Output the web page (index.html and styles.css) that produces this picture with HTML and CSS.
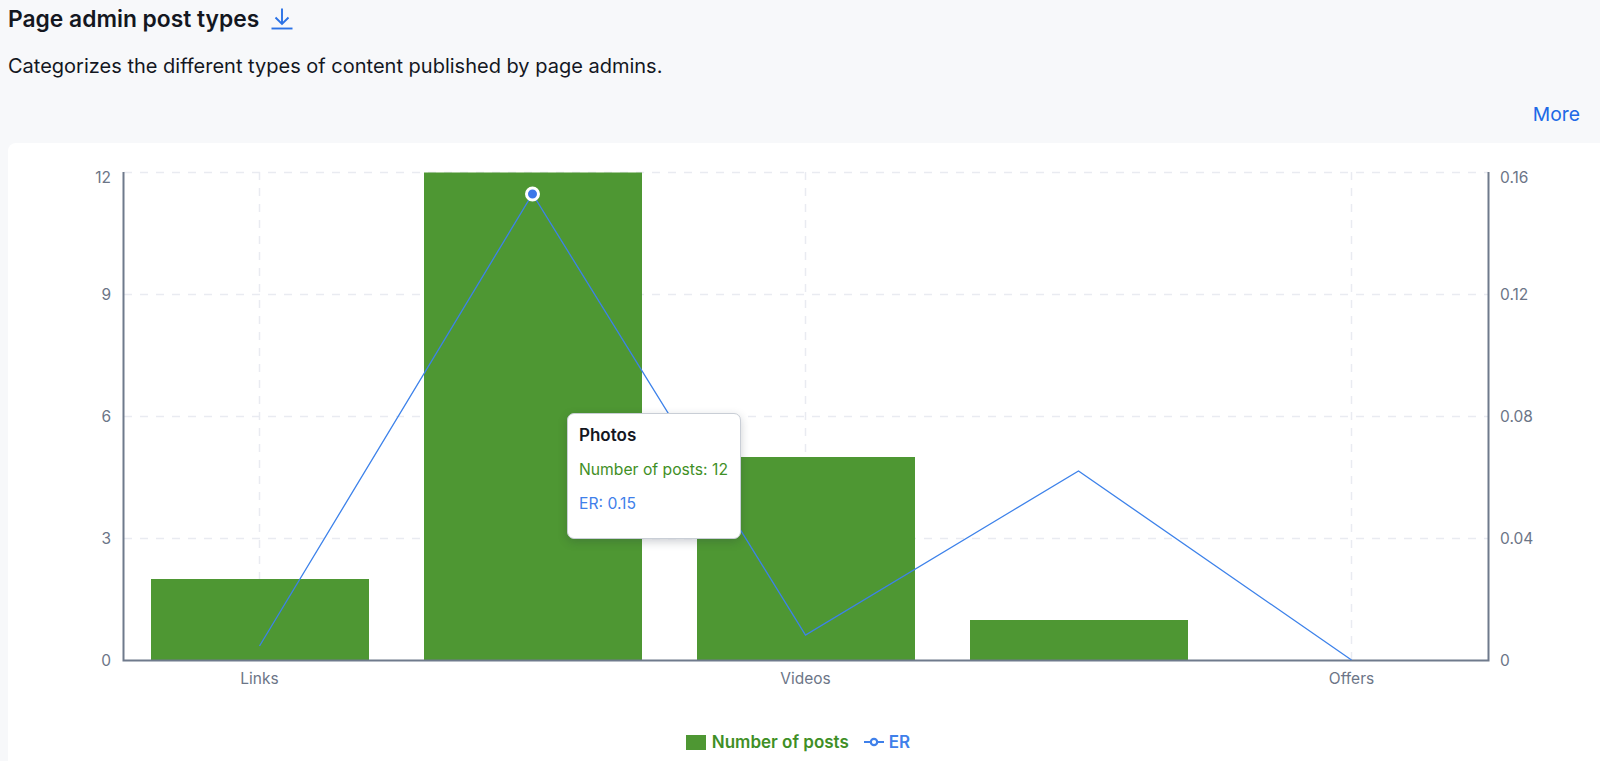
FILE: index.html
```html
<!DOCTYPE html>
<html lang="en">
<head>
<meta charset="utf-8">
<title>Page admin post types</title>
<link rel="stylesheet" href="styles.css">
</head>
<body>
<main class="page">
  <header class="head">
    <h2 class="title">Page admin post types
      <a class="dl" href="#" aria-label="Download">
        <svg class="dl-icon" viewBox="0 0 22 22" width="22" height="22" fill="none" stroke="#2b72e6" stroke-width="1.9"><path d="M11 0.5V15.5M4.5 9.5L11 16L17.5 9.5"/><path d="M0.5 20.5H21.5"/></svg>
      </a>
    </h2>
    <p class="desc">Categorizes the different types of content published by page admins.</p>
    <div class="more-row"><a class="more" href="#">More</a></div>
  </header>
  <section class="card">
    <svg class="chart" viewBox="0 0 1584 588" width="1584" height="588">
      <g class="grid">
        <path d="M116 29.5H1480M116 151.5H1480M116 273.5H1480M116 395.5H1480"/>
        <path d="M251.500 29V517M797.500 29V517M1343.500 29V517"/>
      </g>
      <g class="bars">
        <rect x="143" y="436" width="218" height="81.500"/>
        <rect x="416" y="29.500" width="218" height="488"/>
        <rect x="689" y="314" width="218" height="203.500"/>
        <rect x="962" y="477" width="218" height="40.500"/>
      </g>
      <path class="axis" d="M115.500 29V517.500H1480.500V29"/>
      <polyline class="line" points="251.500,503 524.500,51 797.500,492 1070.500,328 1343.500,517"/>
      <circle class="dot" cx="524.500" cy="51" r="6"/>
      <g class="ticks">
        <text x="103" y="40" text-anchor="end">12</text>
        <text x="103" y="157" text-anchor="end">9</text>
        <text x="103" y="279" text-anchor="end">6</text>
        <text x="103" y="401" text-anchor="end">3</text>
        <text x="103" y="523" text-anchor="end">0</text>
        <text x="1492" y="40">0.16</text>
        <text x="1492" y="157">0.12</text>
        <text x="1492" y="279">0.08</text>
        <text x="1492" y="401">0.04</text>
        <text x="1492" y="523">0</text>
        <text x="251.500" y="541" text-anchor="middle">Links</text>
        <text x="797.500" y="541" text-anchor="middle">Videos</text>
        <text x="1343.500" y="541" text-anchor="middle">Offers</text>
      </g>
    </svg>
    <div class="legend">
      <span class="leg leg-green"><i class="swatch"></i>Number of posts</span>
      <span class="leg leg-blue"><svg class="leg-line" viewBox="0 0 20 10" width="20" height="10" fill="#fff" stroke="#3f80ea" stroke-width="2.2"><path d="M0 5H6M14 5H20"/><circle cx="10" cy="5" r="3.200"/></svg>ER</span>
    </div>
    <div class="tooltip">
      <div class="tip-title">Photos</div>
      <div class="tip-green">Number of posts: 12</div>
      <div class="tip-blue">ER: 0.15</div>
    </div>
  </section>
</main>
</body>
</html>
```
FILE: styles.css
```css
* { box-sizing: border-box; }
html, body { margin: 0; height: 761px; overflow: hidden; }
body { background: #f7f8fa; font-family: Inter, "Liberation Sans", sans-serif; color: #14171f; }
.page { padding: 0 0 0 8px; }
.head { display: flex; flex-direction: column; }
.title { display: flex; align-items: center; gap: 12px; margin: 0; height: 38px; font-size: 22.800px; font-weight: 600; line-height: 38px; }
.dl { display: flex; }
.desc { margin: 14px 0 0; font-size: 20px; line-height: 28px; }
.more-row { display: flex; justify-content: flex-end; margin-top: 19px; height: 30px; padding-right: 20px; }
.more { color: #2069e6; font-size: 19.300px; line-height: 30px; text-decoration: none; }
.card { position: relative; height: 630px; margin-top: 14px; background: #fff; border-radius: 8px 0 0 0; }
.chart { display: block; }
.grid path { fill: none; stroke: #e9ebf1; stroke-width: 1.500; stroke-dasharray: 8 8; }
.bars rect { fill: #4e9733; }
.axis { fill: none; stroke: #6f7a8c; stroke-width: 2; }
.line { fill: none; stroke: #3d82ea; stroke-width: 1.300; }
.dot { fill: #3d78e8; stroke: #fff; stroke-width: 3; }
.ticks text { fill: #6c7587; font-family: Inter, "Liberation Sans", sans-serif; font-size: 15.500px; }
.legend { display: flex; justify-content: center; align-items: center; gap: 15px; height: 22px; padding-right: 12px; font-size: 17px; font-weight: 600; }
.leg { display: flex; align-items: center; gap: 6px; }
.leg-green { color: #3f8f26; }
.leg-blue { color: #3f80ea; gap: 5px; }
.swatch { display: block; width: 20px; height: 15px; background: #4e9733; }
.tooltip { position: absolute; left: 559px; top: 270px; width: 174px; height: 126px; padding: 11px 0 0 11px; background: #fff; border: 1px solid #c9ced6; border-radius: 7px; box-shadow: 0 3px 10px rgba(30, 40, 60, .22); font-size: 15.700px; white-space: nowrap; }
.tip-title { font-size: 17px; font-weight: 600; line-height: 20px; color: #14171f; }
.tip-green { margin-top: 15px; line-height: 20px; color: #3f8f26; }
.tip-blue { margin-top: 14px; line-height: 20px; color: #3f80ea; }
```
